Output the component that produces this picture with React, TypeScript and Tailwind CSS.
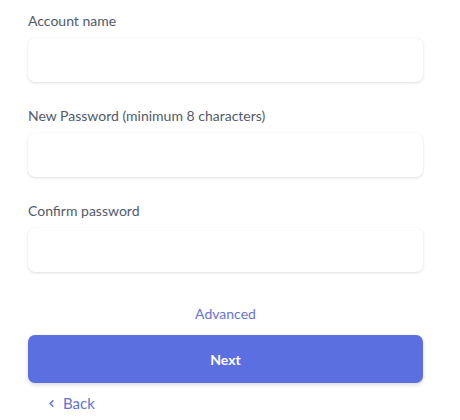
import { ChevronLeft } from "lucide-react";

const FIELDS = [
  { key: "account", label: "Account name", type: "text" },
  { key: "password", label: "New Password (minimum 8 characters)", type: "password" },
  { key: "confirm", label: "Confirm password", type: "password" },
];

export default function App() {
  return (
    <div className="min-h-[420px] w-[460px] bg-white px-[28px] pt-[11px] font-['Lato',sans-serif] text-[14px]">
      <div className="flex w-[395px] flex-col gap-[24px]">
        {FIELDS.map((f) => (
          <label key={f.key} className="flex flex-col gap-[7px]">
            <span className="leading-[20px] text-[#515a6b]">{f.label}</span>
            <input
              type={f.type}
              className="h-[44px] w-full rounded-[7px] bg-white px-3 shadow-[0_1px_3px_rgba(0,0,0,0.13),0_0_1px_rgba(0,0,0,0.06)] outline-none"
            />
          </label>
        ))}
      </div>

      <div className="mt-[32px] flex w-[395px] justify-center leading-[20px] text-[#6673d8]">
        Advanced
      </div>

      <button className="mt-[11px] h-[48px] w-[395px] rounded-[7px] bg-[#5b6fe1] font-bold text-white shadow-[0_2px_4px_rgba(0,0,0,0.15)]">
        Next
      </button>

      <button className="mt-[10px] ml-[18px] flex items-center gap-[6px] leading-[20px] text-[#6473d6]">
        <ChevronLeft className="h-[11px] w-[11px]" strokeWidth={3.5} />
        <span className="text-[15px]">Back</span>
      </button>
    </div>
  );
}
